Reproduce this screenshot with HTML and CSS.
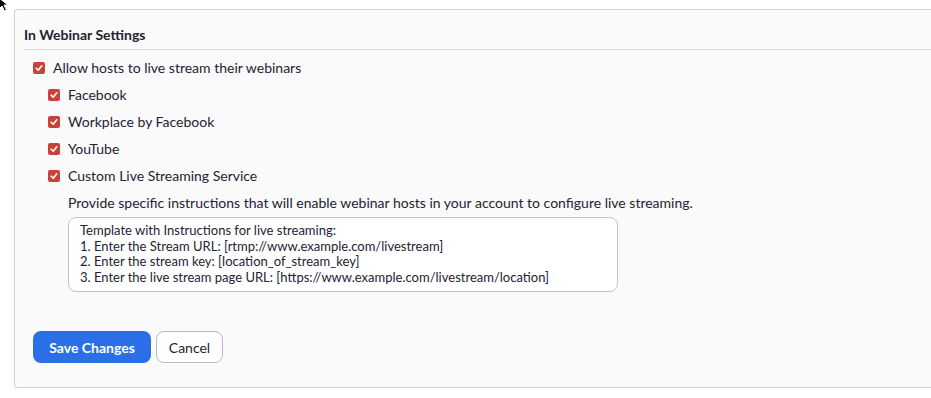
FILE: index.html
```html
<!DOCTYPE html>
<html lang="en">
<head>
    <meta charset="UTF-8">
    <meta name="viewport" content="width=device-width, initial-scale=1.0">
    <title>In Webinar Settings</title>
    <link rel="stylesheet" href="styles.css">
</head>
<body>
    <svg class="cursor" width="12" height="16" viewBox="0 0 12 16">
        <path d="M1 1 L1 12 L4 9 L6.5 14 L8.5 13 L6 8 L10 8 Z" fill="#000" stroke="#fff" stroke-width="1"/>
    </svg>
    <div class="page">
        <div class="panel">
            <div class="section">
                <div class="section-title">In Webinar Settings</div>
                <div class="options">
                    <label class="option">
                        <span class="check"><svg viewBox="0 0 12 12"><path d="M3.2 6.2 L5.2 8.2 L8.8 3.8" /></svg></span>
                        Allow hosts to live stream their webinars
                    </label>
                    <div class="sub-options">
                        <label class="option">
                            <span class="check"><svg viewBox="0 0 12 12"><path d="M3.2 6.2 L5.2 8.2 L8.8 3.8" /></svg></span>
                            Facebook
                        </label>
                        <label class="option">
                            <span class="check"><svg viewBox="0 0 12 12"><path d="M3.2 6.2 L5.2 8.2 L8.8 3.8" /></svg></span>
                            Workplace by Facebook
                        </label>
                        <label class="option">
                            <span class="check"><svg viewBox="0 0 12 12"><path d="M3.2 6.2 L5.2 8.2 L8.8 3.8" /></svg></span>
                            YouTube
                        </label>
                        <label class="option">
                            <span class="check"><svg viewBox="0 0 12 12"><path d="M3.2 6.2 L5.2 8.2 L8.8 3.8" /></svg></span>
                            Custom Live Streaming Service
                        </label>
                        <div class="custom-block">
                            <p class="hint">Provide specific instructions that will enable webinar hosts in your account to configure live streaming.</p>
                            <textarea class="instructions" readonly>Template with Instructions for live streaming:
1. Enter the Stream URL: [rtmp://www.example.com/livestream]
2. Enter the stream key: [location_of_stream_key]
3. Enter the live stream page URL: [https://www.example.com/livestream/location]</textarea>
                        </div>
                    </div>
                </div>
                <div class="actions">
                    <button class="btn btn-primary">Save Changes</button>
                    <button class="btn btn-default">Cancel</button>
                </div>
            </div>
        </div>
    </div>
</body>
</html>
```

FILE: styles.css
```css
body {
    font-family: Lato, "Open Sans", sans-serif;
    margin: 0;
    padding: 0;
    background-color: #fff;
    color: #232333;
    overflow: hidden;
}
.cursor {
    position: absolute;
    top: -3px;
    left: -2px;
}
.page {
    padding: 9px 0 0 14px;
}
.panel {
    width: 940px;
    background-color: #fafafa;
    border: 1px solid #d2d2d2;
    border-right: none;
    border-radius: 4px 0 0 4px;
    padding-bottom: 24px;
}
.section {
    margin-left: 9px;
}
.section-title {
    font-size: 14px;
    font-weight: bold;
    line-height: 20px;
    padding-top: 15px;
    padding-bottom: 4px;
    border-bottom: 1px solid #d6d6d6;
}
.options {
    padding: 4px 0 0 9px;
}
.option {
    display: flex;
    align-items: center;
    height: 27px;
    font-size: 14px;
}
.check {
    width: 12px;
    height: 12px;
    border-radius: 2px;
    background-color: #c9413b;
    margin-right: 8px;
    display: inline-flex;
}
.check svg {
    width: 12px;
    height: 12px;
}
.check path {
    fill: none;
    stroke: #fff;
    stroke-width: 1.6;
    stroke-linecap: round;
    stroke-linejoin: round;
}
.sub-options {
    padding-left: 15px;
}
.custom-block {
    padding-left: 20px;
}
.hint {
    margin: 4px 0 0;
    font-size: 14px;
    line-height: 20px;
}
.instructions {
    display: block;
    box-sizing: border-box;
    width: 550px;
    height: 75px;
    margin-top: 4px;
    padding: 5px 11px 3px;
    border: 1px solid #c4c4c8;
    border-radius: 8px;
    background-color: #fff;
    font-family: Lato, "Open Sans", sans-serif;
    font-size: 13px;
    line-height: 15.7px;
    color: #232333;
    resize: none;
    overflow: hidden;
}
.actions {
    display: flex;
    gap: 5px;
    margin: 39px 0 0 9px;
}
.btn {
    height: 32px;
    border-radius: 8px;
    font-family: Lato, "Open Sans", sans-serif;
    font-size: 14px;
    cursor: pointer;
}
.btn-primary {
    width: 118px;
    background-color: #2b6fe6;
    border: none;
    color: #fff;
    font-weight: bold;
}
.btn-default {
    width: 67px;
    background-color: #fff;
    border: 1px solid #babac0;
    color: #232333;
}
```
